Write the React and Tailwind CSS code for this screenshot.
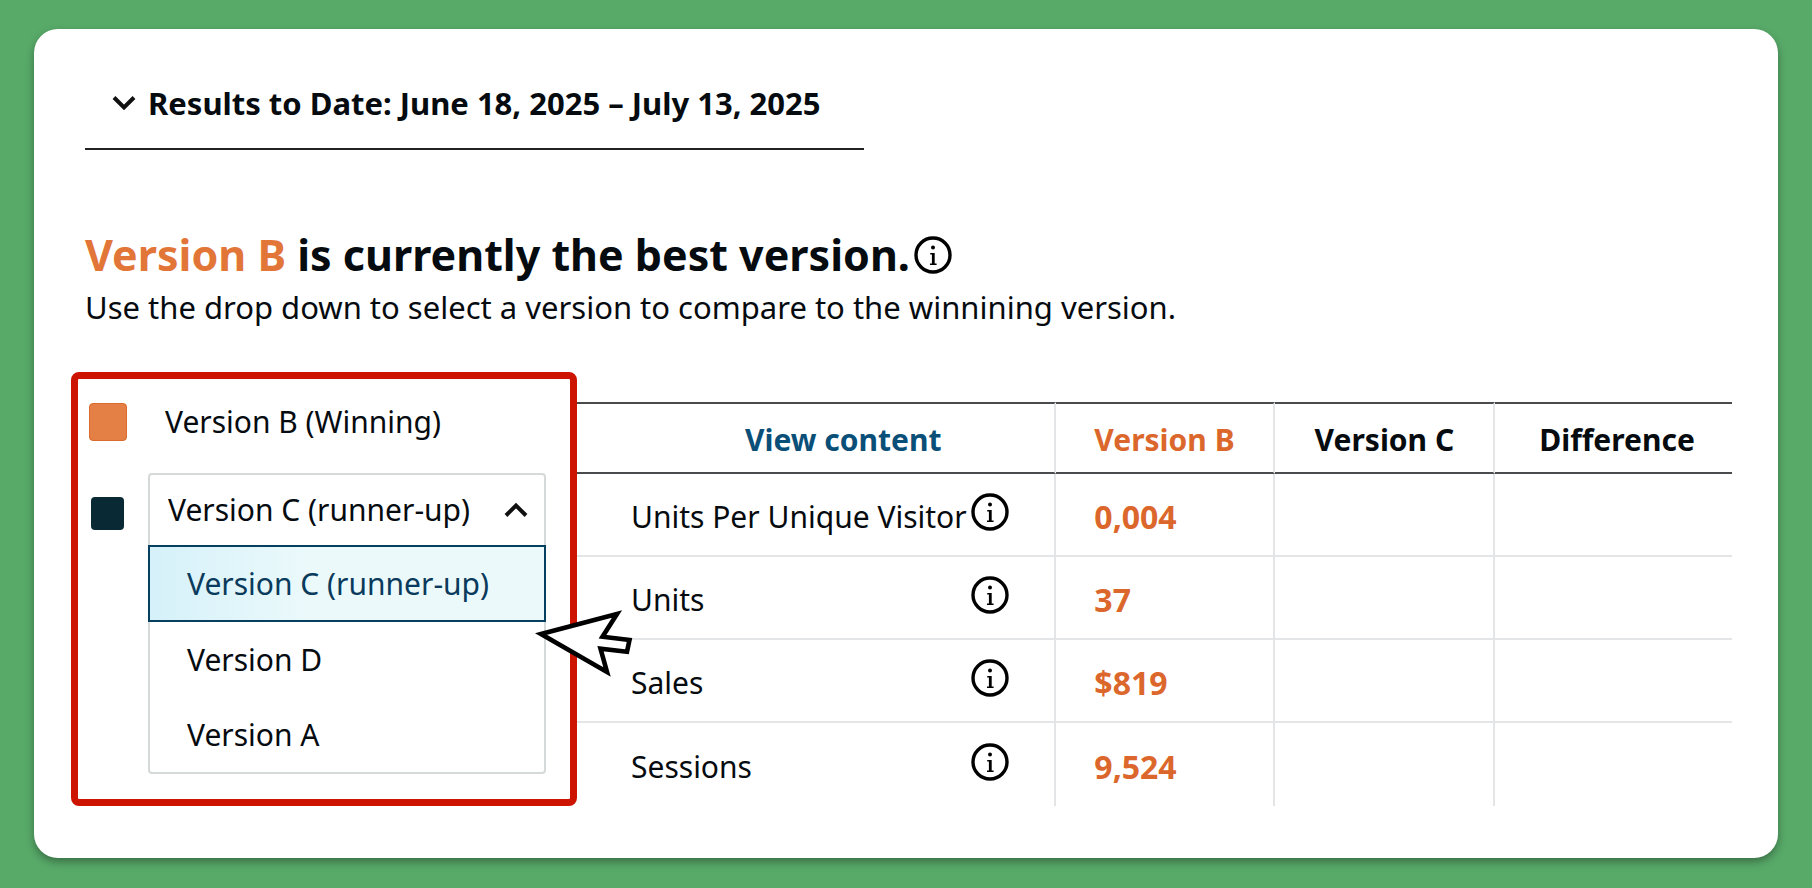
import { useState } from 'react';

const ROWS = [
    { label: 'Units Per Unique Visitor', value: '0,004' },
    { label: 'Units', value: '37' },
    { label: 'Sales', value: '$819' },
    { label: 'Sessions', value: '9,524' },
];

const VERSIONS = ['Version C (runner-up)', 'Version D', 'Version A'];

function InfoIcon() {
    return (
        <svg viewBox="0 0 38 38" className="block size-[38px]" fill="none" stroke="currentColor" aria-hidden="true">
            <circle cx="19" cy="19" r="17" strokeWidth="3.4" />
            <circle cx="19" cy="11.5" r="2" fill="currentColor" stroke="none" />
            <path d="M19.3 17V28" strokeWidth="2.8" />
            <path d="M16.2 17.8h3.4M16 28.2h6.6" strokeWidth="1.6" />
        </svg>
    );
}

function InfoButton({ label }) {
    return (
        <button type="button" aria-label={label} className="shrink-0 text-black">
            <InfoIcon />
        </button>
    );
}

function Chevron({ up }) {
    return (
        <svg viewBox="0 0 24 16" className="block h-4 w-6 shrink-0" fill="none" stroke="#111" strokeWidth="4" aria-hidden="true">
            <path d={up ? 'M2 13.5 12 3.5l10 10' : 'M2 2.5l10 10 10-10'} />
        </svg>
    );
}

// Puntero grande que señala la lista abierta
function Pointer() {
    return (
        <svg viewBox="0 0 110 90" className="pointer-events-none absolute top-[221px] left-[452px] z-10 h-[90px] w-[110px]" aria-hidden="true">
            <path d="M11 34 87 14 72.5 36.7 99.5 40 97 51.7 70.5 48.7 77 72Z" fill="#fff" stroke="#000" strokeWidth="4.6" />
        </svg>
    );
}

function VersionPicker() {
    const [selected, setSelected] = useState(VERSIONS[0]);

    return (
        <div className="relative w-[506px] shrink-0 rounded-lg border-7 border-[#cc1400] pt-[23px] pr-6 pb-[25px] pl-[11px]">
            <div className="flex items-center">
                <span className="size-[38px] rounded-sm border border-[#d96c2c] bg-[#e47f45]" />
                <span className="ml-[38px]">Version B (Winning)</span>
            </div>
            <div className="mt-[31px] flex items-start">
                <span className="mt-6 ml-0.5 size-[33px] rounded-sm bg-[#092a35]" />
                <div className="ml-6 flex-1 rounded-sm border-2 border-[#d5d9d9]">
                    <div className="flex h-[70px] items-center pr-4">
                        <select
                            aria-label="Version to compare"
                            value={selected}
                            onChange={(e) => setSelected(e.target.value)}
                            className="h-12 min-w-0 flex-1 appearance-none bg-transparent pl-[18px] outline-none"
                        >
                            {VERSIONS.map((version) => (
                                <option key={version}>{version}</option>
                            ))}
                        </select>
                        <Chevron up />
                    </div>
                    <ul>
                        {VERSIONS.map((version) => (
                            <li key={version}>
                                <button
                                    type="button"
                                    onClick={() => setSelected(version)}
                                    className={
                                        version === selected
                                            ? '-mx-0.5 flex h-[77px] w-[calc(100%+4px)] items-center border-2 border-[#06405f] bg-linear-to-r from-[#d5f1f9] to-[#ebf9fb] to-40% pl-[37px] text-[#0a3a5c]'
                                            : 'flex h-[75px] w-full items-center pl-[37px]'
                                    }
                                >
                                    {version}
                                </button>
                            </li>
                        ))}
                    </ul>
                </div>
            </div>
            <Pointer />
        </div>
    );
}

function ResultsTable() {
    return (
        <div className="mt-[30px] min-w-0 flex-1">
            <table className="w-full table-fixed border-separate border-spacing-0 text-left">
                <colgroup>
                    <col className="w-[41.5%]" />
                    <col className="w-[18.9%]" />
                    <col className="w-[19.1%]" />
                    <col className="w-[20.5%]" />
                </colgroup>
                <thead>
                    <tr className="h-[72px]">
                        <th className="border-y-2 border-r-2 border-y-[#4a4b4d] border-r-[#e3e5e6] pt-1 pl-[168px]">
                            <a href="#content" className="text-[#0a4f78]">View content</a>
                        </th>
                        <th className="border-y-2 border-r-2 border-y-[#4a4b4d] border-r-[#e3e5e6] pt-1 pl-[38px] text-[#dc672c]">Version B</th>
                        <th className="border-y-2 border-r-2 border-y-[#4a4b4d] border-r-[#e3e5e6] pt-1 pl-10">Version C</th>
                        <th className="border-y-2 border-y-[#4a4b4d] pt-1 pl-11">Difference</th>
                    </tr>
                </thead>
                <tbody className="[&>tr:last-child>*]:border-b-0">
                    {ROWS.map((row) => (
                        <tr key={row.label} className="h-[83px]">
                            <th scope="row" className="border-r-2 border-b-2 border-[#e3e5e6] pr-[45px] pl-[54px] font-normal">
                                <div className="flex items-start justify-between">
                                    <span className="pt-1 whitespace-nowrap">{row.label}</span>
                                    <InfoButton label={`About ${row.label}`} />
                                </div>
                            </th>
                            <td className="border-r-2 border-b-2 border-[#e3e5e6] pt-1 pl-[38px] text-[32px] font-bold text-[#dc672c]">{row.value}</td>
                            <td className="border-r-2 border-b-2 border-[#e3e5e6]" />
                            <td className="border-b-2 border-[#e3e5e6]" />
                        </tr>
                    ))}
                </tbody>
            </table>
        </div>
    );
}

function App() {
    return (
        <div className="min-h-screen bg-[#58aa69] px-[34px] py-[29px] font-['Noto_Sans',sans-serif] text-[31px] leading-10 text-[#060b10]">
            <main className="rounded-3xl bg-white pt-[54px] pr-[46px] pb-[52px] pl-[37px] shadow-[0_4px_8px_rgba(0,0,0,0.35)]">
                <div className="ml-[14px] w-[779px] border-b-2 border-[#222] pb-[25px]">
                    <button type="button" className="flex items-center gap-3 pl-[27px] font-bold">
                        <Chevron />
                        Results to Date: June 18, 2025 – July 13, 2025
                    </button>
                </div>
                <div className="mt-[75px] ml-[14px]">
                    <h1 className="flex items-center gap-1 text-[43px] leading-[60px] font-bold">
                        <span>
                            <span className="text-[#e27638]">Version B</span> is currently the best version.
                        </span>
                        <InfoButton label="About the best version" />
                    </h1>
                    <p className="mt-0.5">Use the drop down to select a version to compare to the winnining version.</p>
                </div>
                <section className="mt-[45px] flex items-start text-[30px]">
                    <VersionPicker />
                    <ResultsTable />
                </section>
            </main>
        </div>
    );
}

export default App;
